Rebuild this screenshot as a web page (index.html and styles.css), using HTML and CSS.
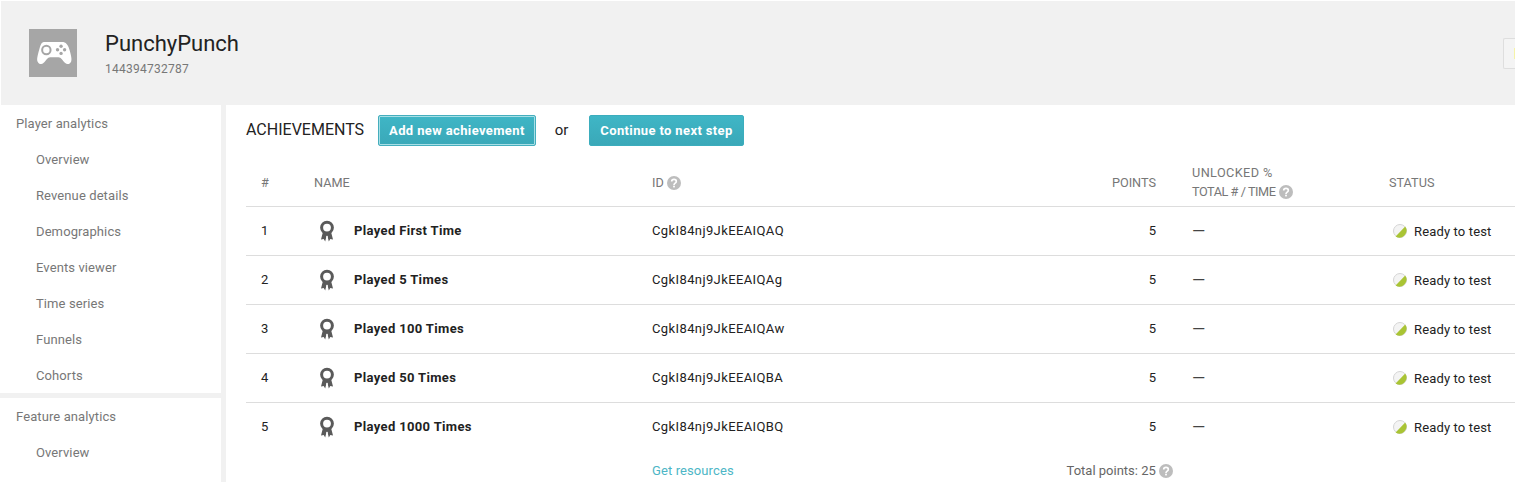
FILE: index.html
```html
<!DOCTYPE html>
<html lang="en">
<head>
<meta charset="utf-8">
<title>PunchyPunch achievements</title>
<link rel="stylesheet" href="styles.css">
</head>
<body>
<svg class="sprites" width="0" height="0" aria-hidden="true">
  <symbol id="ribbon" viewBox="0 0 16 22">
    <path fill="#5a5a5a" d="M3.800 12.500 2 19.400l2.700-.4 1.500 2.400 1.300-5.400h1l1.300 5.400 1.500-2.400 2.700.4-1.800-6.900z"/>
    <circle cx="8" cy="7.600" r="5.400" fill="#fff" stroke="#5a5a5a" stroke-width="3"/>
    <path stroke="#fff" stroke-width="1" d="M8 15.800v6"/>
  </symbol>
  <symbol id="help" viewBox="0 0 14 14">
    <circle cx="7" cy="7" r="7" fill="#bdbdbd"/>
    <path fill="none" stroke="#fff" stroke-width="1.700" d="M4.700 5.500C4.700 4.200 5.700 3.400 7 3.400s2.300.8 2.300 2c0 1.800-2.300 1.700-2.300 3.500"/>
    <rect x="6.100" y="9.700" width="1.800" height="1.700" fill="#fff"/>
  </symbol>
  <symbol id="status" viewBox="0 0 14 14">
    <circle cx="7" cy="7" r="6.500" fill="#f4f4f4" stroke="#d4d4d4"/>
    <path fill="#a9c434" d="M12.200 2.600A7 7 0 0 1 2.600 12.400z"/>
  </symbol>
</svg>

<header class="app-header">
  <div class="app-tile">
    <svg class="pad" viewBox="0 0 44 28" aria-hidden="true">
      <path fill="#fff" d="M12 1h20c5 0 7 3 9 9 2 7 3 11 2 14-1 3-5 4-7 2-3-3-5-7-8-7H18c-3 0-5 4-8 7-2 2-6 1-7-2-1-3 0-7 2-14C7 4 7 1 12 1z"/>
      <circle cx="13.500" cy="10.500" r="5" fill="none" stroke="#a6a6a6" stroke-width="2.400"/>
      <g fill="#a6a6a6"><circle cx="31" cy="6" r="2"/><circle cx="31" cy="14.500" r="2"/><circle cx="26.800" cy="10.200" r="2"/><circle cx="35.200" cy="10.200" r="2"/></g>
    </svg>
  </div>
  <div class="app-info">
    <h1 class="app-name">PunchyPunch</h1>
    <div class="app-id">144394732787</div>
  </div>
  <div class="publish-stub"><span class="publish-mark"></span></div>
</header>

<div class="layout">
  <nav class="sidebar">
    <section class="nav-group">
      <div class="nav-title">Player analytics</div>
      <a class="nav-item">Overview</a>
      <a class="nav-item">Revenue details</a>
      <a class="nav-item">Demographics</a>
      <a class="nav-item">Events viewer</a>
      <a class="nav-item">Time series</a>
      <a class="nav-item">Funnels</a>
      <a class="nav-item">Cohorts</a>
    </section>
    <section class="nav-group nav-group-last">
      <div class="nav-title">Feature analytics</div>
      <a class="nav-item">Overview</a>
    </section>
  </nav>

  <main class="content">
    <div class="toolbar">
      <h2 class="page-title">ACHIEVEMENTS</h2>
      <button class="btn btn-focus">Add new achievement</button>
      <span class="or">or</span>
      <button class="btn">Continue to next step</button>
    </div>

    <table class="grid">
      <colgroup>
        <col class="c-num"><col class="c-name"><col class="c-id"><col class="c-points"><col class="c-unlocked"><col class="c-status">
      </colgroup>
      <thead>
        <tr>
          <th class="t-num">#</th>
          <th>NAME</th>
          <th>ID <svg class="help"><use href="#help"/></svg></th>
          <th class="t-right">POINTS</th>
          <th class="t-unlocked"><span class="line-a">UNLOCKED %</span><br><span class="line-b">TOTAL # / TIME</span> <svg class="help"><use href="#help"/></svg></th>
          <th>STATUS</th>
        </tr>
      </thead>
      <tbody>
        <tr>
          <td class="t-num">1</td>
          <td><div class="ach"><svg class="ribbon"><use href="#ribbon"/></svg><b>Played First Time</b></div></td>
          <td class="code">CgkI84nj9JkEEAIQAQ</td>
          <td class="t-right">5</td>
          <td class="t-unlocked dash">—</td>
          <td><div class="status"><svg class="status-dot"><use href="#status"/></svg>Ready to test</div></td>
        </tr>
        <tr>
          <td class="t-num">2</td>
          <td><div class="ach"><svg class="ribbon"><use href="#ribbon"/></svg><b>Played 5 Times</b></div></td>
          <td class="code">CgkI84nj9JkEEAIQAg</td>
          <td class="t-right">5</td>
          <td class="t-unlocked dash">—</td>
          <td><div class="status"><svg class="status-dot"><use href="#status"/></svg>Ready to test</div></td>
        </tr>
        <tr>
          <td class="t-num">3</td>
          <td><div class="ach"><svg class="ribbon"><use href="#ribbon"/></svg><b>Played 100 Times</b></div></td>
          <td class="code">CgkI84nj9JkEEAIQAw</td>
          <td class="t-right">5</td>
          <td class="t-unlocked dash">—</td>
          <td><div class="status"><svg class="status-dot"><use href="#status"/></svg>Ready to test</div></td>
        </tr>
        <tr>
          <td class="t-num">4</td>
          <td><div class="ach"><svg class="ribbon"><use href="#ribbon"/></svg><b>Played 50 Times</b></div></td>
          <td class="code">CgkI84nj9JkEEAIQBA</td>
          <td class="t-right">5</td>
          <td class="t-unlocked dash">—</td>
          <td><div class="status"><svg class="status-dot"><use href="#status"/></svg>Ready to test</div></td>
        </tr>
        <tr class="row-last">
          <td class="t-num">5</td>
          <td><div class="ach"><svg class="ribbon"><use href="#ribbon"/></svg><b>Played 1000 Times</b></div></td>
          <td class="code">CgkI84nj9JkEEAIQBQ</td>
          <td class="t-right">5</td>
          <td class="t-unlocked dash">—</td>
          <td><div class="status"><svg class="status-dot"><use href="#status"/></svg>Ready to test</div></td>
        </tr>
      </tbody>
      <tfoot>
        <tr>
          <td></td>
          <td></td>
          <td><a class="link">Get resources</a></td>
          <td class="t-right total">Total points: 25 <svg class="help help-hang"><use href="#help"/></svg></td>
          <td></td>
          <td></td>
        </tr>
      </tfoot>
    </table>
  </main>
</div>
</body>
</html>
```

FILE: styles.css
```css
* { box-sizing: border-box; }

body {
  margin: 0;
  height: 482px;
  overflow: hidden;
  background: #fff;
  color: #222;
  font: 13px/18px Roboto, "Liberation Sans", sans-serif;
}

.sprites { position: absolute; }

.app-header {
  display: flex;
  align-items: center;
  height: 104px;
  margin: 1px 0 0 1px;
  padding-left: 28px;
  background: #f1f1f1;
}

.app-tile {
  display: flex;
  align-items: center;
  justify-content: center;
  flex: none;
  width: 48px;
  height: 48px;
  background: #a6a6a6;
}

.pad { width: 37px; height: 24px; }

.app-info { flex: 1; margin-left: 28px; }

.app-name {
  margin: 0;
  font-size: 22px;
  font-weight: 400;
  line-height: 28px;
  color: #222;
}

.app-id {
  margin-top: 3px;
  font-size: 12px;
  line-height: 16px;
  letter-spacing: .25px;
  color: #777;
}

.publish-stub {
  flex: none;
  width: 12px;
  height: 31px;
  padding: 9px 0 0 10px;
  border: 1px solid #dedede;
  border-right: 0;
  border-radius: 2px 0 0 2px;
  background: #f4f4f4;
}

.publish-mark { display: block; width: 1px; height: 11px; background: #f5f3a8; }

.layout { display: flex; height: 377px; overflow: hidden; background: #f1f1f1; }

.sidebar {
  display: flex;
  flex-direction: column;
  gap: 5px;
  flex: none;
  width: 221px;
  margin-right: 5px;
}

.nav-group { background: #fff; color: #777; letter-spacing: .1px; }

.nav-group-last { flex: 1; }

.nav-title { height: 36px; padding: 10px 16px 0; }

.nav-item { display: block; height: 36px; padding: 10px 36px 0; }

.content { flex: 1; min-width: 0; padding-left: 20px; background: #fff; }

.toolbar { display: flex; align-items: center; height: 52px; padding-bottom: 2px; }

.page-title { margin: 0; font-size: 16px; font-weight: 400; color: #222; }

.btn {
  height: 31px;
  padding: 0 10px;
  border: 1px solid #3badbd;
  border-radius: 2px;
  background: linear-gradient(#3fb6c6, #3aa8b8);
  color: #fff;
  font: 700 13px Roboto, "Liberation Sans", sans-serif;
  letter-spacing: .37px;
}

.btn-focus {
  margin-left: 14px;
  border-color: #45aebd;
  box-shadow: inset 0 0 0 1px #a8dfe6;
}

.or { margin: 0 21px 0 19px; font-size: 15px; }

.grid { width: 1269px; border-collapse: collapse; table-layout: fixed; }

.c-num { width: 68px; }
.c-name { width: 338px; }
.c-id { width: 360px; }
.c-points { width: 144px; }
.c-unlocked { width: 233px; }
.c-status { width: 126px; }

.grid th {
  height: 49px;
  padding: 2px 0 0;
  font-size: 12.700px;
  font-weight: 400;
  line-height: 19px;
  text-align: left;
  color: #777;
  border-bottom: 1px solid #ddd;
}

.grid td {
  height: 49px;
  padding: 0;
  border-bottom: 1px solid #ddd;
}

.grid .row-last td { border-bottom: 0; }

.grid tfoot td { height: 30px; border: 0; padding-top: 10px; }

.grid tfoot .total { padding-top: 9px; }

.line-a { letter-spacing: .4px; }
.line-b { letter-spacing: -.45px; }

.grid .t-num { padding-left: 15px; }

.grid .t-right { text-align: right; }

.grid .t-unlocked { padding-left: 36px; }

.grid .dash { padding-top: 1px; font-size: 17px; color: #444; }

.code { letter-spacing: .39px; }

.help { width: 14px; height: 14px; vertical-align: -3px; }

.help-hang { margin-right: -17px; }

.ach { display: flex; align-items: center; }

.ribbon { flex: none; width: 16px; height: 22px; margin: 1px 19px 0 5px; }

.ach b { font-weight: 700; letter-spacing: .35px; color: #222; }

.status { display: flex; align-items: center; margin-top: 2px; letter-spacing: .15px; }

.status-dot { flex: none; width: 14px; height: 14px; margin: 0 7px 1px 4px; }

.link { color: #4db6c6; letter-spacing: .1px; }

.total { color: #666; white-space: nowrap; }
```
